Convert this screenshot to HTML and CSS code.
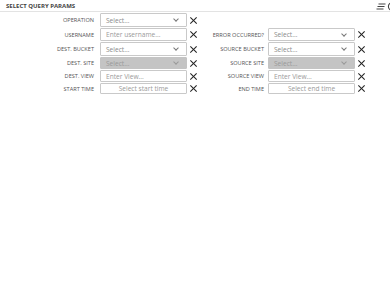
FILE: index.html
```html
<!DOCTYPE html>
<html lang="en">
  <head>
    <meta charset="UTF-8" />
    <meta name="viewport" content="width=device-width, initial-scale=1.0" />
    <title>Select Query Params</title>
    <link rel="stylesheet" href="styles.css">
  </head>
  <body>
    <div class="panel">
      <div class="panel-head">
        <span class="panel-title">SELECT QUERY PARAMS</span>
        <span class="panel-tools">
          <svg width="20" height="9" viewBox="0 0 20 9">
            <path d="M2.5 2h7M1.5 4.5h7M0.5 7h7" stroke="#444" stroke-width="1.2" fill="none" />
            <circle cx="16" cy="4.5" r="3.6" stroke="#444" stroke-width="1.1" fill="none" />
          </svg>
        </span>
      </div>

      <div class="params">
        <!-- row 1 -->
        <label class="lbl">OPERATION</label>
        <div class="field sel"><span class="ph">Select...</span><span class="chev"></span></div>
        <span class="clear"></span>
        <span></span><span></span><span></span>

        <!-- row 2 -->
        <label class="lbl">USERNAME</label>
        <input class="field" type="text" placeholder="Enter username..." />
        <span class="clear"></span>
        <label class="lbl">ERROR OCCURRED?</label>
        <div class="field sel"><span class="ph">Select...</span><span class="chev"></span></div>
        <span class="clear"></span>

        <!-- row 3 -->
        <label class="lbl">DEST. BUCKET</label>
        <div class="field sel"><span class="ph">Select...</span><span class="chev"></span></div>
        <span class="clear"></span>
        <label class="lbl">SOURCE BUCKET</label>
        <div class="field sel"><span class="ph">Select...</span><span class="chev"></span></div>
        <span class="clear"></span>

        <!-- row 4 -->
        <label class="lbl">DEST. SITE</label>
        <div class="field sel disabled"><span class="ph">Select...</span><span class="chev"></span></div>
        <span class="clear"></span>
        <label class="lbl">SOURCE SITE</label>
        <div class="field sel disabled"><span class="ph">Select...</span><span class="chev"></span></div>
        <span class="clear"></span>

        <!-- row 5 -->
        <label class="lbl">DEST. VIEW</label>
        <input class="field" type="text" placeholder="Enter View..." />
        <span class="clear"></span>
        <label class="lbl">SOURCE VIEW</label>
        <input class="field" type="text" placeholder="Enter View..." />
        <span class="clear"></span>

        <!-- row 6 -->
        <label class="lbl">START TIME</label>
        <input class="field time" type="text" placeholder="Select start time" />
        <span class="clear"></span>
        <label class="lbl">END TIME</label>
        <input class="field time" type="text" placeholder="Select end time" />
        <span class="clear"></span>
      </div>
    </div>
  </body>
</html>
```

FILE: styles.css
```css
body {
  margin: 0;
  background: #fff;
  font-family: "Open Sans", "Liberation Sans", sans-serif;
  overflow: hidden;
}
.panel-head {
  display: flex;
  justify-content: space-between;
  align-items: center;
  height: 11px;
  padding-left: 6px;
  border-bottom: 1px solid #e3e3e3;
}
.panel-title {
  font-size: 6px;
  font-weight: bold;
  color: #444;
}
.panel-tools {
  display: flex;
  margin-right: -6px;
  padding-top: 1px;
}
.params {
  display: grid;
  grid-template-columns: 100px 87px 13px 68px 87px 20px;
  grid-template-rows: 14px 13px 14px 12px 12px 11px;
  row-gap: 1px;
  margin-top: 1px;
  align-items: center;
}
.lbl {
  text-align: right;
  font-size: 5.6px;
  color: #555;
  padding-right: 6px;
}
.params .lbl:nth-child(6n + 4) {
  padding-right: 4px;
}
.field {
  box-sizing: border-box;
  height: 100%;
  width: 100%;
  margin: 0;
  border: 1px solid #c9c9c9;
  border-radius: 1px;
  background: #fff;
  padding: 0 5px;
  font-family: inherit;
  font-size: 6.6px;
  color: #333;
  outline: none;
}
.field::placeholder {
  color: #9a9a9a;
}
.sel {
  display: flex;
  align-items: center;
  justify-content: space-between;
}
.ph {
  color: #8a8a8a;
}
.chev {
  width: 3px;
  height: 3px;
  border-right: 1px solid #777;
  border-bottom: 1px solid #777;
  transform: rotate(45deg);
  margin: -2px 3px 0 0;
}
.disabled {
  background: #c4c4c4;
  border-color: #c4c4c4;
}
.disabled .ph {
  color: #999;
}
.disabled .chev {
  border-color: #999;
}
.time {
  text-align: center;
}
.clear {
  position: relative;
  width: 7px;
  height: 7px;
  margin-left: 3px;
}
.clear::before,
.clear::after {
  content: "";
  position: absolute;
  left: -1px;
  top: 3px;
  width: 9px;
  height: 1.1px;
  background: #222;
  transform: rotate(45deg);
}
.clear::after {
  transform: rotate(-45deg);
}
```
